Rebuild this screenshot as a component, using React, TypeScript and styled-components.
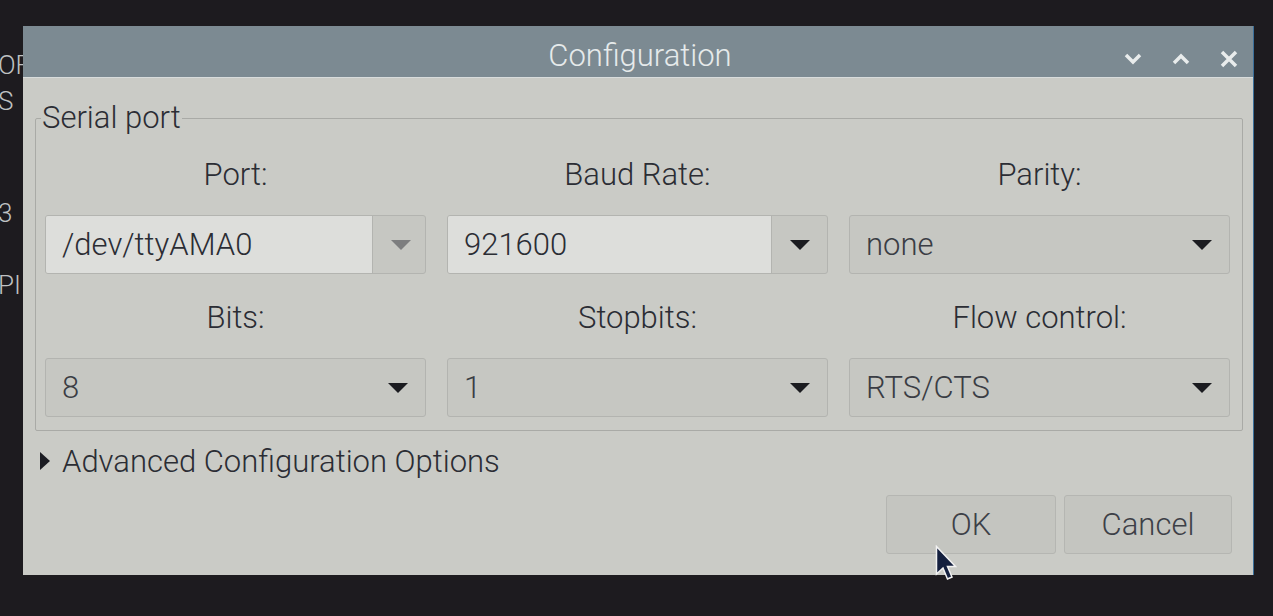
import React from "react";
import styled, { createGlobalStyle } from "styled-components";

const Global = createGlobalStyle`
  html, body { margin: 0; padding: 0; }
  body {
    background: #1d1b1f;
    width: 1273px;
    height: 616px;
    overflow: hidden;
    font-family: Roboto, "Liberation Sans", sans-serif;
  }
`;

const Desktop = styled.div`
  display: flex;
  align-items: flex-start;
  width: 1273px;
  height: 616px;
  padding-top: 26px;
  box-sizing: border-box;
  position: relative;
`;

const Strip = styled.div`
  width: 23px;
  flex: none;
  overflow: hidden;
  display: flex;
  flex-direction: column;
  color: #bfc1c2;
  font-size: 26px;
  font-weight: 300;
  line-height: 30px;
  white-space: nowrap;
`;

const StripText = styled.div<{ $gap: number }>`
  margin-top: ${(p) => p.$gap}px;
  margin-left: -2px;
`;

const Window = styled.div`
  width: 1230px;
  height: 549px;
  display: flex;
  flex-direction: column;
  background: #cacbc6;
  box-shadow: 1px 0 0 #3a6f9a;
`;

const TitleBar = styled.div`
  height: 52px;
  flex: none;
  background: #7c8a92;
  border-bottom: 1px solid #d8dcdc;
  box-sizing: border-box;
  display: flex;
  align-items: center;
  padding-top: 6px;
`;

const Title = styled.div`
  flex: 1;
  text-align: center;
  color: #e6eaeb;
  font-size: 31px;
  font-weight: 300;
  padding-left: 148px;
  margin-top: 2px;
`;

const TitleButton = styled.div`
  width: 48px;
  height: 30px;
  display: flex;
  align-items: center;
  justify-content: center;
  margin-top: 8px;
`;

const Body = styled.div`
  flex: 1;
  display: flex;
  flex-direction: column;
  padding: 25px 10px 20px 12px;
  box-sizing: border-box;
`;

const Frame = styled.fieldset`
  margin: 0;
  padding: 27px 11px 13px 9px;
  border: 1px solid #a9aaa6;
  border-radius: 2px;
`;

const Legend = styled.legend`
  padding: 0 1px;
  margin-left: -4px;
  font-size: 31px;
  font-weight: 300;
  line-height: 30px;
  color: #2b2d34;
`;

const Grid = styled.div`
  display: grid;
  grid-template-columns: repeat(3, 381px);
  column-gap: 21px;
  row-gap: 29px;
`;

const Cell = styled.div`
  display: flex;
  flex-direction: column;
  align-items: stretch;
  gap: 25px;
`;

const FieldLabel = styled.div`
  text-align: center;
  font-size: 31px;
  font-weight: 300;
  line-height: 30px;
  color: #2b2d34;
`;

const ComboBox = styled.div`
  height: 59px;
  display: flex;
  border: 1px solid #b3b4b0;
  border-radius: 3px;
  box-sizing: border-box;
  background: #c6c7c2;
  overflow: hidden;
`;

const Entry = styled.div<{ $width: number }>`
  width: ${(p) => p.$width}px;
  flex: none;
  background: #dddedb;
  border-right: 1px solid #b3b4b0;
  display: flex;
  align-items: center;
  padding-left: 16px;
  box-sizing: border-box;
  font-size: 31px;
  font-weight: 300;
  color: #2b2d34;
`;

const ComboValue = styled.div`
  flex: 1;
  display: flex;
  align-items: center;
  padding-left: 16px;
  font-size: 31px;
  font-weight: 300;
  color: #3a3d44;
`;

const Spacer = styled.div`
  flex: 1;
`;

const ArrowBox = styled.div`
  flex: none;
  width: 55px;
  display: flex;
  align-items: center;
  justify-content: center;
`;

const Expander = styled.div`
  margin-top: 15px;
  padding-left: 5px;
  display: flex;
  align-items: center;
  gap: 12px;
  height: 30px;
  font-size: 31px;
  font-weight: 300;
  color: #2b2d34;
`;

const Buttons = styled.div`
  margin-top: 19px;
  display: flex;
  justify-content: flex-end;
  gap: 8px;
  padding-right: 11px;
`;

const Button = styled.div<{ $w: number }>`
  width: ${(p) => p.$w}px;
  height: 59px;
  box-sizing: border-box;
  border: 1px solid #b5b6b2;
  border-radius: 3px;
  background: #c4c5c0;
  display: flex;
  align-items: center;
  justify-content: center;
  font-size: 31px;
  font-weight: 300;
  color: #3d4047;
`;

const Cursor = styled.svg`
  position: absolute;
  left: 935px;
  top: 545px;
`;

const Arrow = ({ color }: { color: string }) => (
  <svg width="22" height="12" viewBox="0 0 22 12">
    <path d="M1 1 L21 1 L11 11 Z" fill={color} />
  </svg>
);

type ComboProps = {
  value: string;
  editable?: boolean;
  entryWidth?: number;
  arrowColor?: string;
};

const Combo = ({ value, editable, entryWidth = 327, arrowColor = "#1b1c20" }: ComboProps) => (
  <ComboBox>
    {editable ? <Entry $width={entryWidth}>{value}</Entry> : <ComboValue>{value}</ComboValue>}
    {editable && <Spacer />}
    <ArrowBox>
      <Arrow color={arrowColor} />
    </ArrowBox>
  </ComboBox>
);

export default function App() {
  return (
    <>
      <Global />
      <Desktop>
        <Strip>
          <StripText $gap={24}>OF</StripText>
          <StripText $gap={6}>S</StripText>
          <StripText $gap={82}>3</StripText>
          <StripText $gap={42}>PI</StripText>
        </Strip>
        <Window>
          <TitleBar>
            <Title>Configuration</Title>
            <TitleButton>
              <svg width="18" height="12" viewBox="0 0 18 12">
                <path d="M2 2 L9 9 L16 2" stroke="#e9ecec" strokeWidth="3.5" fill="none" />
              </svg>
            </TitleButton>
            <TitleButton>
              <svg width="18" height="12" viewBox="0 0 18 12">
                <path d="M2 10 L9 3 L16 10" stroke="#e9ecec" strokeWidth="3.5" fill="none" />
              </svg>
            </TitleButton>
            <TitleButton>
              <svg width="18" height="18" viewBox="0 0 18 18">
                <path d="M2 2 L16 16 M16 2 L2 16" stroke="#e9ecec" strokeWidth="3.5" fill="none" />
              </svg>
            </TitleButton>
          </TitleBar>
          <Body>
            <Frame>
              <Legend>Serial port</Legend>
              <Grid>
                <Cell>
                  <FieldLabel>Port:</FieldLabel>
                  <Combo value="/dev/ttyAMA0" editable entryWidth={327} arrowColor="#7d7e7f" />
                </Cell>
                <Cell>
                  <FieldLabel>Baud Rate:</FieldLabel>
                  <Combo value="921600" editable entryWidth={324} />
                </Cell>
                <Cell>
                  <FieldLabel>Parity:</FieldLabel>
                  <Combo value="none" />
                </Cell>
                <Cell>
                  <FieldLabel>Bits:</FieldLabel>
                  <Combo value="8" />
                </Cell>
                <Cell>
                  <FieldLabel>Stopbits:</FieldLabel>
                  <Combo value="1" />
                </Cell>
                <Cell>
                  <FieldLabel>Flow control:</FieldLabel>
                  <Combo value="RTS/CTS" />
                </Cell>
              </Grid>
            </Frame>
            <Expander>
              <svg width="10" height="18" viewBox="0 0 10 18">
                <path d="M0 0 L10 9 L0 18 Z" fill="#1b1c22" />
              </svg>
              Advanced Configuration Options
            </Expander>
            <Buttons>
              <Button $w={170}>OK</Button>
              <Button $w={168}>Cancel</Button>
            </Buttons>
          </Body>
        </Window>
        <Cursor width="22" height="38" viewBox="0 0 22 38">
          <path d="M1.5 1.5 L1.5 29 L8 23 L12.5 34 L17 32 L12.5 21.5 L20.5 21.5 Z" fill="#14203f" stroke="#f2f2f2" strokeWidth="1.5" />
        </Cursor>
      </Desktop>
    </>
  );
}
